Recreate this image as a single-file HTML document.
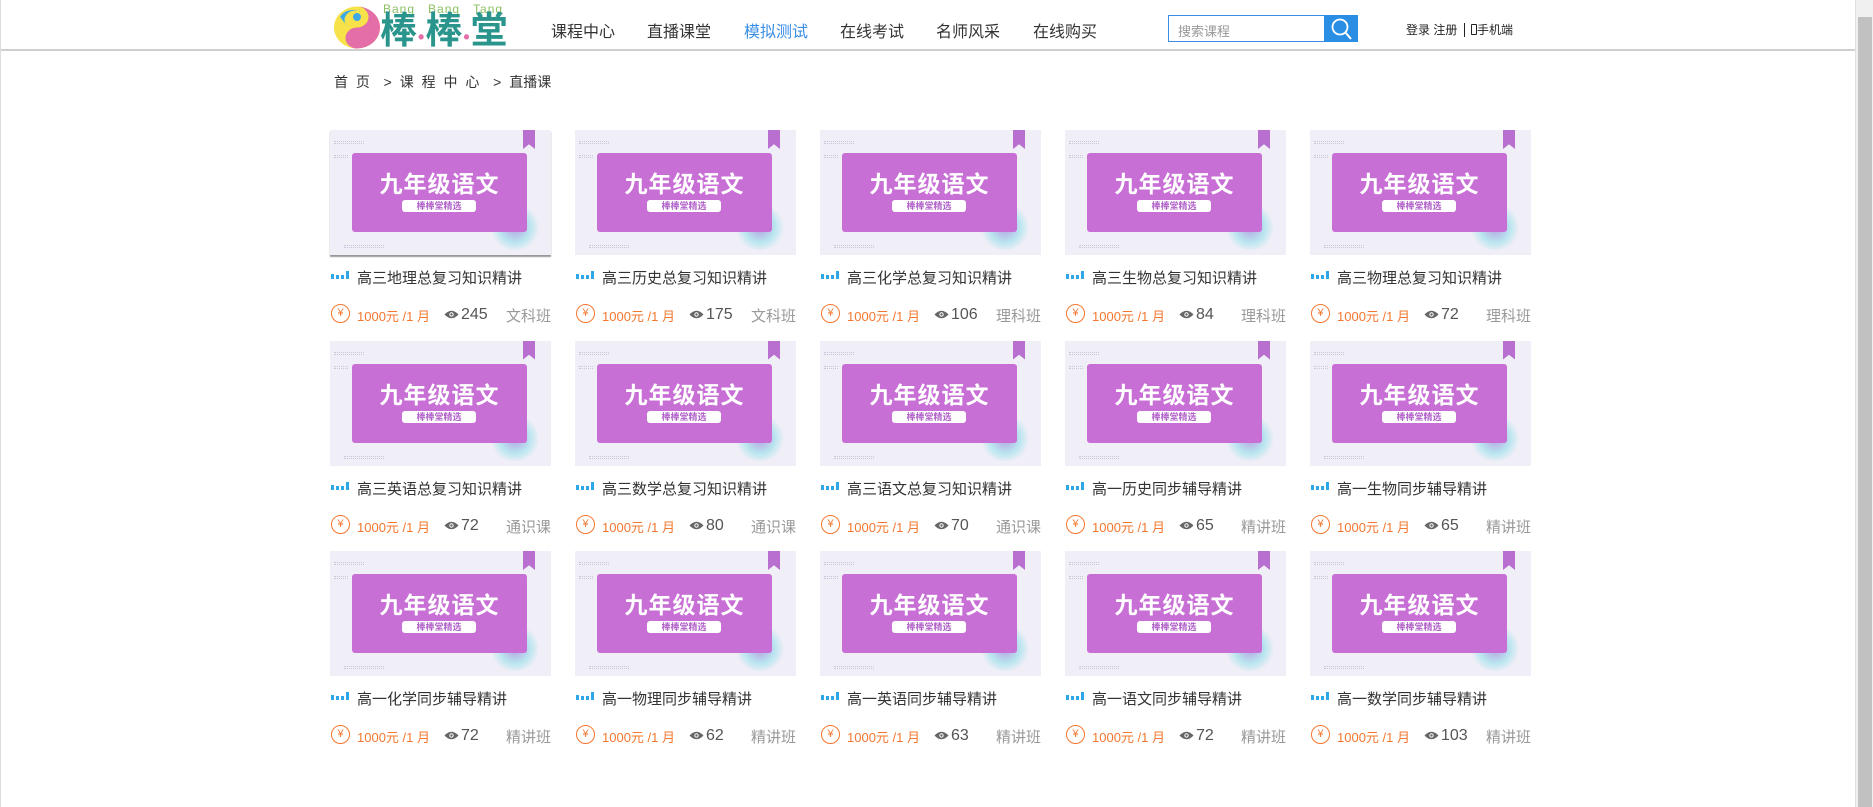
<!DOCTYPE html>
<html><head><meta charset="utf-8">
<style>
*{margin:0;padding:0;box-sizing:border-box}
body{width:1873px;height:807px;background:#fff;font-family:"Liberation Sans","Noto Sans CJK SC",sans-serif;position:relative;overflow:hidden;color:#333}
.abs{position:absolute}
.hdr{position:absolute;left:0;top:0;width:1855px;height:51px;border-bottom:2px solid #cfcfcf}
.nav{position:absolute;top:18px;font-size:16px;color:#333;white-space:nowrap}
.sb{position:absolute;right:0;top:0;width:18px;height:807px;background:#f0f0f0;border-left:1px solid #e0e0e0}
.sb div{position:absolute;left:2px;top:17px;width:14px;height:790px;background:#c1c1c1}
.card{position:absolute;width:221px;height:200px}
.img{position:absolute;left:0;top:0;width:221px;height:125px;background:#f0eef7;overflow:hidden}
.box{position:absolute;left:22px;top:23px;width:175px;height:79px;background:#c86fd6;border-radius:3px}
.box .t{position:absolute;left:0;top:12px;width:175px;text-align:center;color:#fff;font-size:23px;font-weight:bold;letter-spacing:1px}
.box .p{position:absolute;left:50px;top:47px;width:74px;height:12px;background:#fff;border-radius:3px;color:#b060c8;font-size:9px;line-height:12px;text-align:center;font-weight:bold}
.bm{position:absolute;left:193px;top:0;width:12px;height:19px;background:#b86fd0;clip-path:polygon(0 0,100% 0,100% 100%,50% 75%,0 100%)}
.glow{position:absolute;left:160px;top:75px;width:50px;height:45px;border-radius:50%;background:radial-gradient(circle,rgba(140,110,210,.6) 0,rgba(120,220,230,.45) 45%,rgba(240,238,247,0) 72%)}
.dots{position:absolute;height:3px;border-top:1px dotted #c8c8d8;border-bottom:1px dotted #c8c8d8}
.ttl{position:absolute;left:27px;top:137px;font-size:15px;color:#333;white-space:nowrap}
.bars{position:absolute;left:1px;top:141px;width:20px;height:8px}
.bars i{position:absolute;bottom:0;width:3px;background:#2ea7e8}
.yen{position:absolute;left:1px;top:174px;width:19px;height:19px;border:1.5px solid #f5772f;border-radius:50%;color:#f5772f;font-size:11px;line-height:16px;text-align:center}
.pr{position:absolute;left:27px;top:176px;font-size:13px;color:#f5772f;white-space:nowrap}
.eye{position:absolute;left:114px;top:180px;width:15px;height:9px}
.cnt{position:absolute;left:131px;top:176px;font-size:16px;color:#555}
.lb{position:absolute;right:0;top:175px;font-size:15px;color:#999}
</style></head><body>
<div class="hdr"></div>
<div class="abs" style="left:0;top:0;width:1px;height:807px;background:#ddd"></div>
<svg class="abs" style="left:332px;top:5px" width="50" height="45" viewBox="0 0 50 45">
<ellipse cx="25" cy="22.5" rx="23" ry="21" fill="#f7e24a"/>
<path d="M25 1.5 A23 21 0 0 1 25 43.5 A11.5 10.5 0 0 1 25 22.5 A11.5 10.5 0 0 0 25 1.5Z" fill="#e46fa8"/>
<path d="M8 12 A14 12 0 0 1 30 8 A10 9 0 0 0 16 22 Z" fill="#3fa9e6"/>
<circle cx="25" cy="12" r="4" fill="#3fa9e6"/>
</svg>
<div class="abs" style="left:383px;top:2px;font-size:12px;color:#8cc063;letter-spacing:1px;white-space:nowrap">Bang&nbsp;&nbsp;&nbsp;Bang&nbsp;&nbsp;&nbsp;Tang</div>
<div class="abs" style="left:380px;top:10px;font-size:37px;font-weight:bold;color:#2a958c;white-space:nowrap;line-height:42px;letter-spacing:1px">棒<span style="color:#e46fa8;font-size:18px">•</span>棒<span style="color:#e46fa8;font-size:18px">•</span>堂</div>
<div class="nav" style="left:551px">课程中心</div>
<div class="nav" style="left:647px">直播课堂</div>
<div class="nav" style="left:744px;color:#3a8ee6">模拟测试</div>
<div class="nav" style="left:840px">在线考试</div>
<div class="nav" style="left:936px">名师风采</div>
<div class="nav" style="left:1033px">在线购买</div>
<div class="abs" style="left:1168px;top:15px;width:157px;height:27px;border:1px solid #3a8ee6;font-size:13px;color:#999;padding:5px 9px">搜索课程</div>
<div class="abs" style="left:1324px;top:15px;width:34px;height:27px;background:#2a8fe4">
<svg width="34" height="27"><circle cx="16" cy="12" r="7.5" fill="none" stroke="#fff" stroke-width="1.8"/><line x1="21.5" y1="17.5" x2="27" y2="24" stroke="#fff" stroke-width="2"/></svg></div>
<div class="abs" style="left:1406px;top:21px;font-size:12px;color:#222;white-space:nowrap">登录 注册 <span style="display:inline-block;width:1px;height:14px;background:#222;vertical-align:-3px;margin:0 3px"></span> <span style="display:inline-block;width:6px;height:11px;border:1px solid #222;border-radius:1px;vertical-align:-1px"></span>手机端</div>
<div class="abs" style="left:334px;top:72px;font-size:14px;color:#333;white-space:nowrap;letter-spacing:2px">首 页 &nbsp;&gt; 课 程 中 心 &nbsp;&gt; <span style="letter-spacing:0">直播课</span></div>
<div class="sb"><div></div></div>

<div id="g"></div>
<script>
var d=[["高三地理总复习知识精讲",245,"文科班"],["高三历史总复习知识精讲",175,"文科班"],["高三化学总复习知识精讲",106,"理科班"],["高三生物总复习知识精讲",84,"理科班"],["高三物理总复习知识精讲",72,"理科班"],
["高三英语总复习知识精讲",72,"通识课"],["高三数学总复习知识精讲",80,"通识课"],["高三语文总复习知识精讲",70,"通识课"],["高一历史同步辅导精讲",65,"精讲班"],["高一生物同步辅导精讲",65,"精讲班"],
["高一化学同步辅导精讲",72,"精讲班"],["高一物理同步辅导精讲",62,"精讲班"],["高一英语同步辅导精讲",63,"精讲班"],["高一语文同步辅导精讲",72,"精讲班"],["高一数学同步辅导精讲",103,"精讲班"]];
var h="";
for(var i=0;i<15;i++){var x=330+(i%5)*245,y=130+Math.floor(i/5)*210.5;
h+='<div class="card" style="left:'+x+'px;top:'+y+'px"><div class="img"'+(i==0?' style="box-shadow:0 2px 1px #999"':'')+'><div class="dots" style="left:4px;top:11px;width:30px"></div><div class="dots" style="left:14px;top:115px;width:40px"></div><div class="dots" style="left:4px;top:25px;width:14px"></div><div class="glow"></div><div class="box"><div class="t">九年级语文</div><div class="p">棒棒堂精选</div></div><div class="bm"></div></div>'+
'<div class="bars"><i style="left:0;height:5px"></i><i style="left:5px;height:4px"></i><i style="left:10px;height:4px"></i><i style="left:15px;height:8px"></i></div><div class="ttl">'+d[i][0]+'</div>'+
'<div class="yen">¥</div><div class="pr">1000元 /1 月</div><svg class="eye" viewBox="0 0 15 9"><path d="M0.5 4.5Q7.5 -3 14.5 4.5Q7.5 12 0.5 4.5Z" fill="#666"/><circle cx="7.5" cy="4.5" r="2.2" fill="#fff"/><circle cx="7.5" cy="4.5" r="1.2" fill="#666"/></svg><div class="cnt">'+d[i][1]+'</div><div class="lb">'+d[i][2]+'</div></div>';}
document.getElementById("g").innerHTML=h;
</script>
</body></html>
